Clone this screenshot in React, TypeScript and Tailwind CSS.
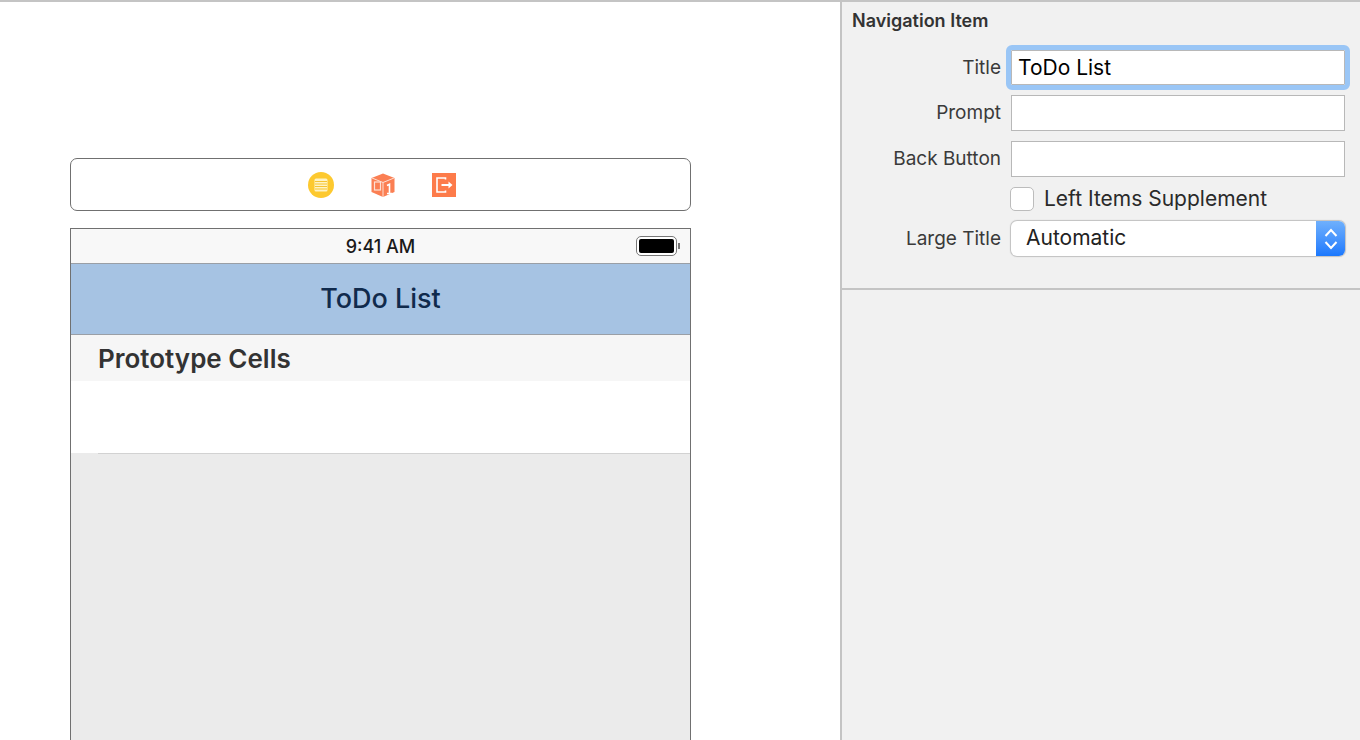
import React from "react";

const font = { fontFamily: '"Inter", "Liberation Sans", sans-serif' };

function Row({ label, children, cls }: { label: string; children: React.ReactNode; cls: string }) {
  return (
    <div className={`flex items-center ${cls}`}>
      <div className="w-[149px] pr-[-0px] text-right text-[19px] leading-[24px] text-[#3a3a3a]">{label}</div>
      <div className="ml-[10px] w-[334px]">{children}</div>
    </div>
  );
}

function Field() {
  return <div className="h-[36px] border border-[#b8b8b8] bg-white" />;
}

function Icons() {
  return (
    <div className="flex items-center gap-[35px]">
      <svg width="28" height="28" viewBox="0 0 28 28">
        <circle cx="14" cy="14" r="13" fill="#fdc92f" />
        <rect x="7.5" y="7.5" width="13" height="13" rx="1.5" fill="#fff3c4" />
        <path d="M8 10.5h12M8 13h12M8 15.5h12M8 18h12" stroke="#f5c433" strokeWidth="1" />
      </svg>
      <svg width="26" height="26" viewBox="0 0 26 26">
        <path d="M13 1.5 24.5 6v14L13 25 1.5 20V6z" fill="#fb7f53" />
        <path d="M2 6 13 10.5 24 6M13 10.5V25" stroke="#fde0d3" strokeWidth="1" fill="none" />
        <rect x="4.5" y="10" width="6" height="8" fill="none" stroke="#fde0d3" strokeWidth="1.2" />
        <path d="M17 13.5l2.5-1.2v9M17 21.5h5" stroke="#fff" strokeWidth="1.6" fill="none" />
      </svg>
      <svg width="26" height="26" viewBox="0 0 26 26">
        <rect x="1" y="1" width="24" height="24" fill="#fd7b4a" />
        <path d="M14.5 7.5V6H6v14h8.5v-1.5" stroke="#fff" strokeWidth="1.6" fill="none" />
        <path d="M10.5 13h8" stroke="#fff" strokeWidth="2" />
        <path d="M17.5 9.5 21.5 13l-4 3.5z" fill="#fff" />
      </svg>
    </div>
  );
}

export default function App() {
  return (
    <div style={font} className="flex h-[740px] w-[1360px] flex-col overflow-hidden bg-white antialiased">
      <div className="h-[2px] shrink-0 bg-[#c4c4c4]" />
      <div className="flex min-h-0 flex-1">
        <div className="flex w-[840px] shrink-0 flex-col pl-[70px] pt-[156px]">
          <div className="flex h-[53px] w-[621px] shrink-0 items-center justify-center rounded-[7px] border border-[#707070] bg-white pl-[2px]">
            <Icons />
          </div>
          <div className="mt-[17px] flex w-[621px] flex-1 flex-col border-x border-t border-[#707070] bg-[#ebebeb]">
            <div className="relative flex h-[34px] shrink-0 items-center justify-center bg-[#f8f8f8] pt-[1px] text-[18px] font-medium text-[#1a1a1a]">
              9:41 AM
              <div className="absolute left-[565px] top-[7px] flex items-center">
                <div className="h-[20px] w-[41px] rounded-[5px] border border-[#777] bg-white p-[2px]">
                  <div className="h-full w-full rounded-[2px] bg-black" />
                </div>
                <div className="ml-[1px] h-[6px] w-[2px] bg-[#777]" />
              </div>
            </div>
            <div className="flex h-[72px] shrink-0 items-center justify-center border-y border-[#9a9fa6] bg-[#a6c3e3] text-[27px] font-medium text-[#102a4c]">
              ToDo List
            </div>
            <div className="flex h-[46px] shrink-0 items-center bg-[#f6f6f6] pl-[27px] text-[26px] font-semibold text-[#333]">
              Prototype Cells
            </div>
            <div className="h-[72px] shrink-0 bg-white" />
            <div className="ml-[27px] h-px shrink-0 bg-[#d2d2d2]" />
          </div>
        </div>
        <div className="flex min-w-0 flex-1 flex-col border-l-2 border-[#c4c4c4] bg-[#f1f1f1]">
          <div className="h-[288px] shrink-0 border-b-2 border-[#c4c4c4] pl-[10px]">
            <div className="pt-[7px] text-[18px] font-semibold leading-[24px] text-[#333]">Navigation Item</div>
            <Row label="Title" cls="mt-[17px]">
              <div className="h-[35px] border border-[#b8b8b8] bg-white pl-[6px] text-[21px] leading-[33px] text-black outline-[5px] outline-[#9ac6f6] rounded-[1px]">
                ToDo List
              </div>
            </Row>
            <Row label="Prompt" cls="mt-[10px]"><Field /></Row>
            <Row label="Back Button" cls="mt-[10px]"><Field /></Row>
            <div className="mt-[10px] flex items-center pl-[158px]">
              <div className="h-[24px] w-[24px] rounded-[5px] border border-[#bcbcbc] bg-white" />
              <div className="ml-[10px] text-[21px] leading-[24px] text-[#2a2a2a]">Left Items Supplement</div>
            </div>
            <Row label="Large Title" cls="mt-[10px]">
              <div className="flex h-[35px] overflow-hidden rounded-[6px] bg-white shadow-[0_0_1px_1px_#c0c0c0]">
                <div className="flex-1 pl-[15px] text-[21px] leading-[34px] text-[#222]">Automatic</div>
                <div className="flex w-[29px] items-center justify-center bg-gradient-to-b from-[#6fb0fc] to-[#1a78fd]">
                  <svg width="16" height="26" viewBox="0 0 16 26" fill="none" stroke="#fff" strokeWidth="2">
                    <path d="M2.5 10 8 4l5.5 6M2.5 16 8 22l5.5-6" />
                  </svg>
                </div>
              </div>
            </Row>
          </div>
        </div>
      </div>
    </div>
  );
}
